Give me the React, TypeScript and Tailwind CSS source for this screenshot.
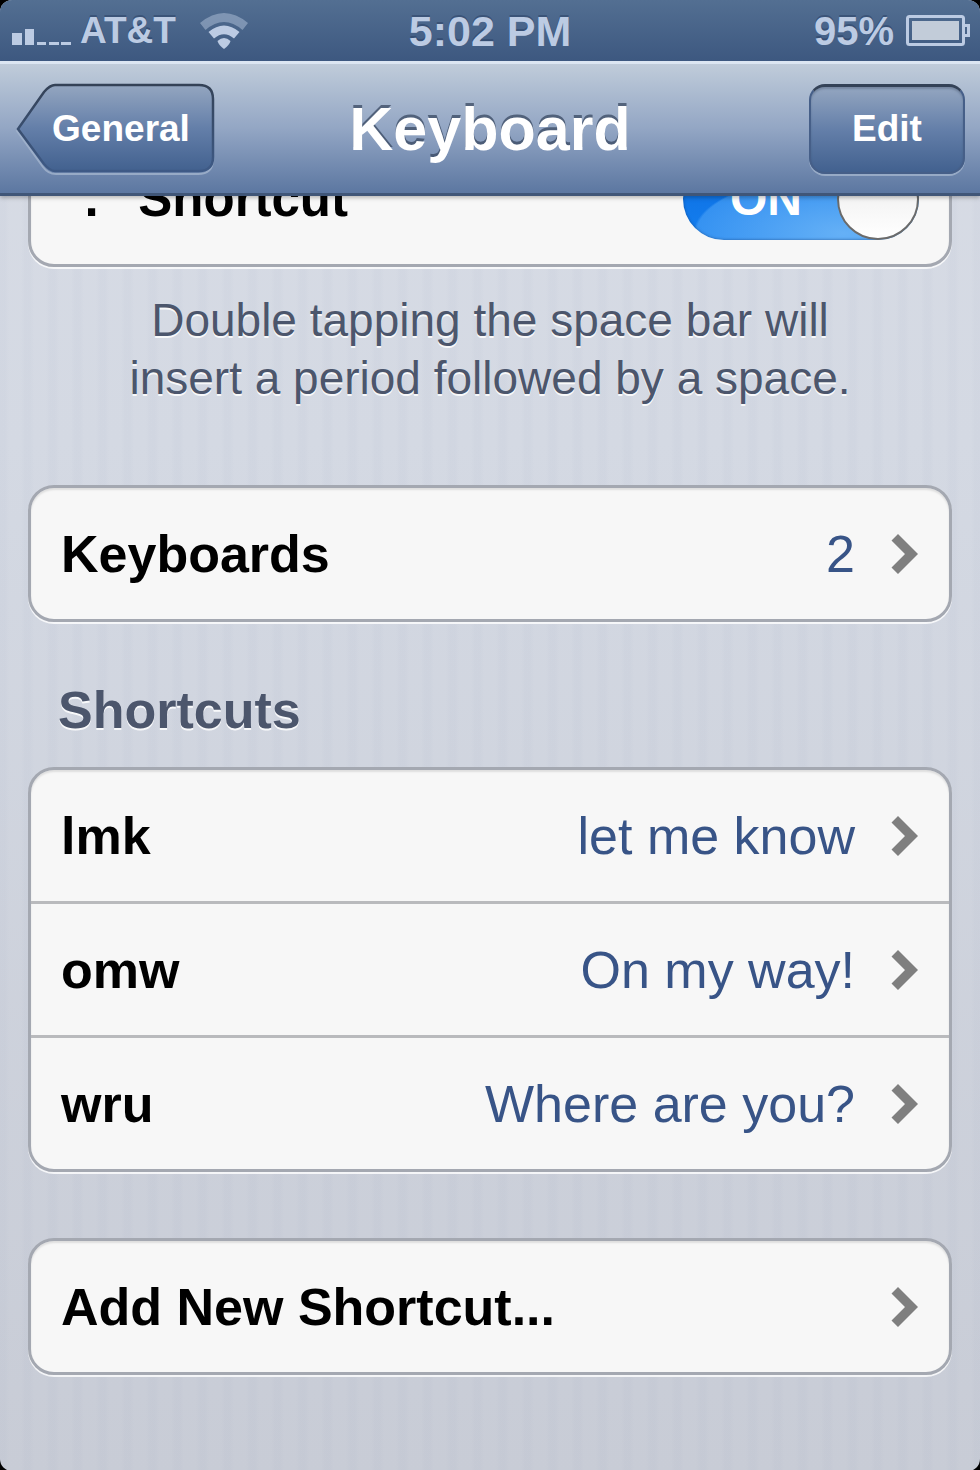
import { useState, type ReactNode } from 'react'

const SHORTCUTS = [
  { shortcut: 'lmk', phrase: 'let me know' },
  { shortcut: 'omw', phrase: 'On my way!' },
  { shortcut: 'wru', phrase: 'Where are you?' },
]

export default function App() {
  const [periodShortcut, setPeriodShortcut] = useState(true)

  return (
    <div className="min-h-screen bg-black flex font-['Liberation_Sans',Arial,sans-serif] text-[52px] leading-[58px]">
      <div className="flex-1 flex flex-col overflow-hidden rounded-xl bg-[repeating-linear-gradient(90deg,rgba(110,125,165,0.03)_0px,rgba(110,125,165,0.03)_5px,transparent_9px,transparent_21px,rgba(110,125,165,0.03)_25px),linear-gradient(#d8dce5,#d4d9e3_30%,#c8ccd6)]">
        <header className="relative z-10 shadow-[0_2px_4px_rgba(0,0,0,0.25)]">
          <StatusBar />
          <NavBar />
        </header>

        <main className="flex-1 px-7 pb-24">
          {/* Scrolled partly under the nav bar */}
          <Card className="-mt-[66px]">
            <label className="flex items-center justify-between h-[131px] pl-7 pr-[30px]">
              <span className="text-[51px] font-bold text-black">“.” Shortcut</span>
              <Switch checked={periodShortcut} onChange={setPeriodShortcut} />
            </label>
          </Card>
          <p className="mt-6 mx-auto max-w-[760px] text-center text-[46px] text-[#4c566c] [text-shadow:0_2px_0_rgba(255,255,255,0.85)]">
            Double tapping the space bar will insert a period followed by a space.
          </p>

          <Card className="mt-[78px]">
            <Row label="Keyboards" value="2" />
          </Card>

          <h2 className="mt-[59px] mb-7 px-[30px] font-bold text-[#4c566c] [text-shadow:0_2px_0_rgba(255,255,255,0.85)]">
            Shortcuts
          </h2>
          <Card>
            <ul className="divide-y-3 divide-[#b9babd]">
              {SHORTCUTS.map((s) => (
                <li key={s.shortcut}>
                  <Row label={s.shortcut} value={s.phrase} />
                </li>
              ))}
            </ul>
          </Card>

          <Card className="mt-[66px]">
            <Row label="Add New Shortcut..." />
          </Card>
        </main>
      </div>
    </div>
  )
}

function StatusBar() {
  return (
    <div className="grid grid-cols-[1fr_auto_1fr] items-center h-[61px] px-2.5 bg-linear-to-b from-[#536f92] to-[#3d5880] text-[#bccbe3] font-bold [text-shadow:0_-2px_0_rgba(30,50,85,0.4)]">
      <div className="flex items-center">
        <svg className="w-[60px] h-4 mt-3 ml-0.5" viewBox="0 0 60 16" fill="currentColor" aria-hidden="true">
          <path d="M0 4h10v12H0zM13 0h9v16h-9zM25 13h9v3h-9zM37 13h10v3H37zM49 13h10v3H49z" />
        </svg>
        <span className="ml-2 text-[37px]">AT&amp;T</span>
        <svg className="ml-6 w-12 h-9" viewBox="0 0 48 36" fill="currentColor" aria-hidden="true">
          <path opacity="0.45" d="M0 10Q24 -10 48 10L42.500 17Q24 1 5.500 17Z" />
          <path d="M8.500 19Q24 6 39.500 19L34 25.500Q24 17 14 25.500Z" />
          <path d="M17.500 28Q24 22 30.500 28Q29.500 32 24 36Q18.500 32 17.500 28Z" />
        </svg>
      </div>
      <span className="text-[43px]">5:02 PM</span>
      <div className="flex items-center justify-end gap-3">
        <span className="text-[40px]">95%</span>
        <svg className="w-16 h-8" viewBox="0 0 64 32" aria-hidden="true">
          <rect x="1.500" y="1.500" width="56" height="28" rx="2" fill="none" stroke="currentColor" strokeWidth="3" />
          <rect x="6" y="6" width="47" height="19" fill="#c2ccd9" />
          <path d="M59 10.500h3.500v10H59" fill="none" stroke="currentColor" strokeWidth="3" />
        </svg>
      </div>
    </div>
  )
}

function NavBar() {
  return (
    <div className="grid grid-cols-[1fr_auto_1fr] items-center h-[135px] px-[15px] border-t-3 border-b-3 border-t-[#dce6f2] border-b-[#405678] bg-linear-to-b from-[#c0ccda] via-[#93a6c4] to-[#5c77a1] text-white font-bold [text-shadow:0_-3px_0_rgba(50,65,90,0.7)]">
      <button type="button" className="relative justify-self-start w-[200px] h-[92px] pl-3 text-[37px]">
        <svg className="absolute inset-0 w-full h-full" viewBox="0 0 200 92" aria-hidden="true">
          <defs>
            <linearGradient id="back-fill" x1="0" y1="0" x2="0" y2="1">
              <stop offset="0" stopColor="#94a6c0" />
              <stop offset="0.5" stopColor="#647fa9" />
              <stop offset="1" stopColor="#42618f" />
            </linearGradient>
            <linearGradient id="back-edge" x1="0" y1="0" x2="0" y2="1">
              <stop offset="0" stopColor="#344257" />
              <stop offset="1" stopColor="#3e5a86" />
            </linearGradient>
          </defs>
          <path
            d="M41 4H183Q198 4 198 19V76Q198 91 183 91H41Q33 91 28 84L2 48L28 11Q33 4 41 4Z"
            fill="none"
            stroke="#a3b4cd"
            strokeWidth="2"
            opacity="0.8"
          />
          <path
            d="M40 2H184Q198 2 198 16V74Q198 88 184 88H40Q35 88 29 81L3 46L29 9Q35 2 40 2Z"
            fill="url(#back-fill)"
            stroke="url(#back-edge)"
            strokeWidth="2.500"
          />
        </svg>
        <span className="relative">General</span>
      </button>
      <h1 className="text-[61px]">Keyboard</h1>
      <button
        type="button"
        className="justify-self-end w-[156px] h-[90px] rounded-2xl border-2 border-t-3 border-[#465f88] border-t-[#344257] bg-linear-to-b from-[#94a6c0] via-[#647fa9] to-[#42618f] text-[37px] shadow-[0_2px_0_rgba(163,180,205,0.8),inset_0_2px_2px_rgba(50,65,90,0.3)]"
      >
        Edit
      </button>
    </div>
  )
}

function Card({ className = '', children }: { className?: string; children: ReactNode }) {
  return (
    <section
      className={`overflow-hidden rounded-[26px] border-3 border-[#a4a8b1] bg-[#f7f7f7] shadow-[0_2px_0_rgba(255,255,255,0.8),inset_0_2px_2px_rgba(0,0,0,0.1)] ${className}`}
    >
      {children}
    </section>
  )
}

function Row({ label, value }: { label: string; value?: string }) {
  return (
    <a href="#" className="flex items-center h-[131px] pl-[30px] pr-[31px]">
      <span className="flex-1 font-bold text-black">{label}</span>
      {value && <span className="text-[#385487]">{value}</span>}
      <svg className="ml-9 w-[27px] h-10" viewBox="0 0 27 40" fill="#7f7f7f" aria-hidden="true">
        <path d="M0.500 6.500L7 0L27 20L7 40L0.500 33.500L14 20Z" />
      </svg>
    </a>
  )
}

function Switch({ checked, onChange }: { checked: boolean; onChange: (value: boolean) => void }) {
  return (
    <span
      className={`flex items-center w-[236px] h-[82px] rounded-full ${
        checked
          ? 'justify-end bg-[radial-gradient(ellipse_150px_60px_at_68%_92%,rgba(110,182,247,0.9)_0%,rgba(62,152,243,0.8)_98%,transparent_100%),linear-gradient(#0a6be0,#1580f0)]'
          : 'justify-start bg-[#e4e4e4]'
      } shadow-[inset_0_0_3px_rgba(20,60,120,0.7)]`}
    >
      <input
        type="checkbox"
        role="switch"
        className="sr-only"
        checked={checked}
        onChange={(e) => onChange(e.target.checked)}
      />
      {checked && <span className="flex-1 pl-3 text-center text-[48px] font-bold text-white">ON</span>}
      <span className="w-[82px] h-[82px] rounded-full border-2 border-[#6b6b6b] bg-linear-to-b from-[#c8c8c8] via-[#f4f4f4] to-white" />
    </span>
  )
}
